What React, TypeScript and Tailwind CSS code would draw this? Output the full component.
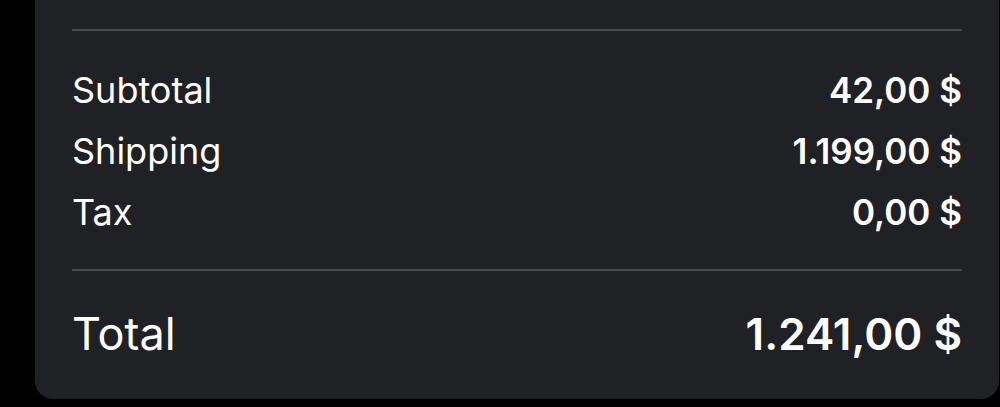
export default function App() {
  const rows = [
    { label: "Subtotal", value: "42,00 $" },
    { label: "Shipping", value: "1.199,00 $" },
    { label: "Tax", value: "0,00 $" },
  ];
  return (
    <div className="w-[1000px] h-[407px] bg-black overflow-hidden" style={{ fontFamily: "Inter, 'Noto Sans', sans-serif" }}>
      <div className="ml-[35px] w-[964px] h-[399px] bg-[#202124] rounded-b-[18px] px-[37px] pt-[29px] text-white">
        <div className="h-[2px] bg-[#47484c]" />
        <div className="mt-[29px] flex flex-col">
          {rows.map((r) => (
            <div key={r.label} className="flex justify-between items-center h-[61px] leading-[61px]">
              <span className="font-normal text-[36px]">{r.label}</span>
              <span className="font-semibold text-[35px]">{r.value}</span>
            </div>
          ))}
        </div>
        <div className="mt-[26px] h-[2px] bg-[#47484c]" />
        <div className="mt-[33px] flex justify-between items-center h-[60px] leading-[60px]">
          <span className="font-normal text-[45px]">Total</span>
          <span className="font-semibold text-[44px]">1.241,00 $</span>
        </div>
      </div>
    </div>
  );
}
